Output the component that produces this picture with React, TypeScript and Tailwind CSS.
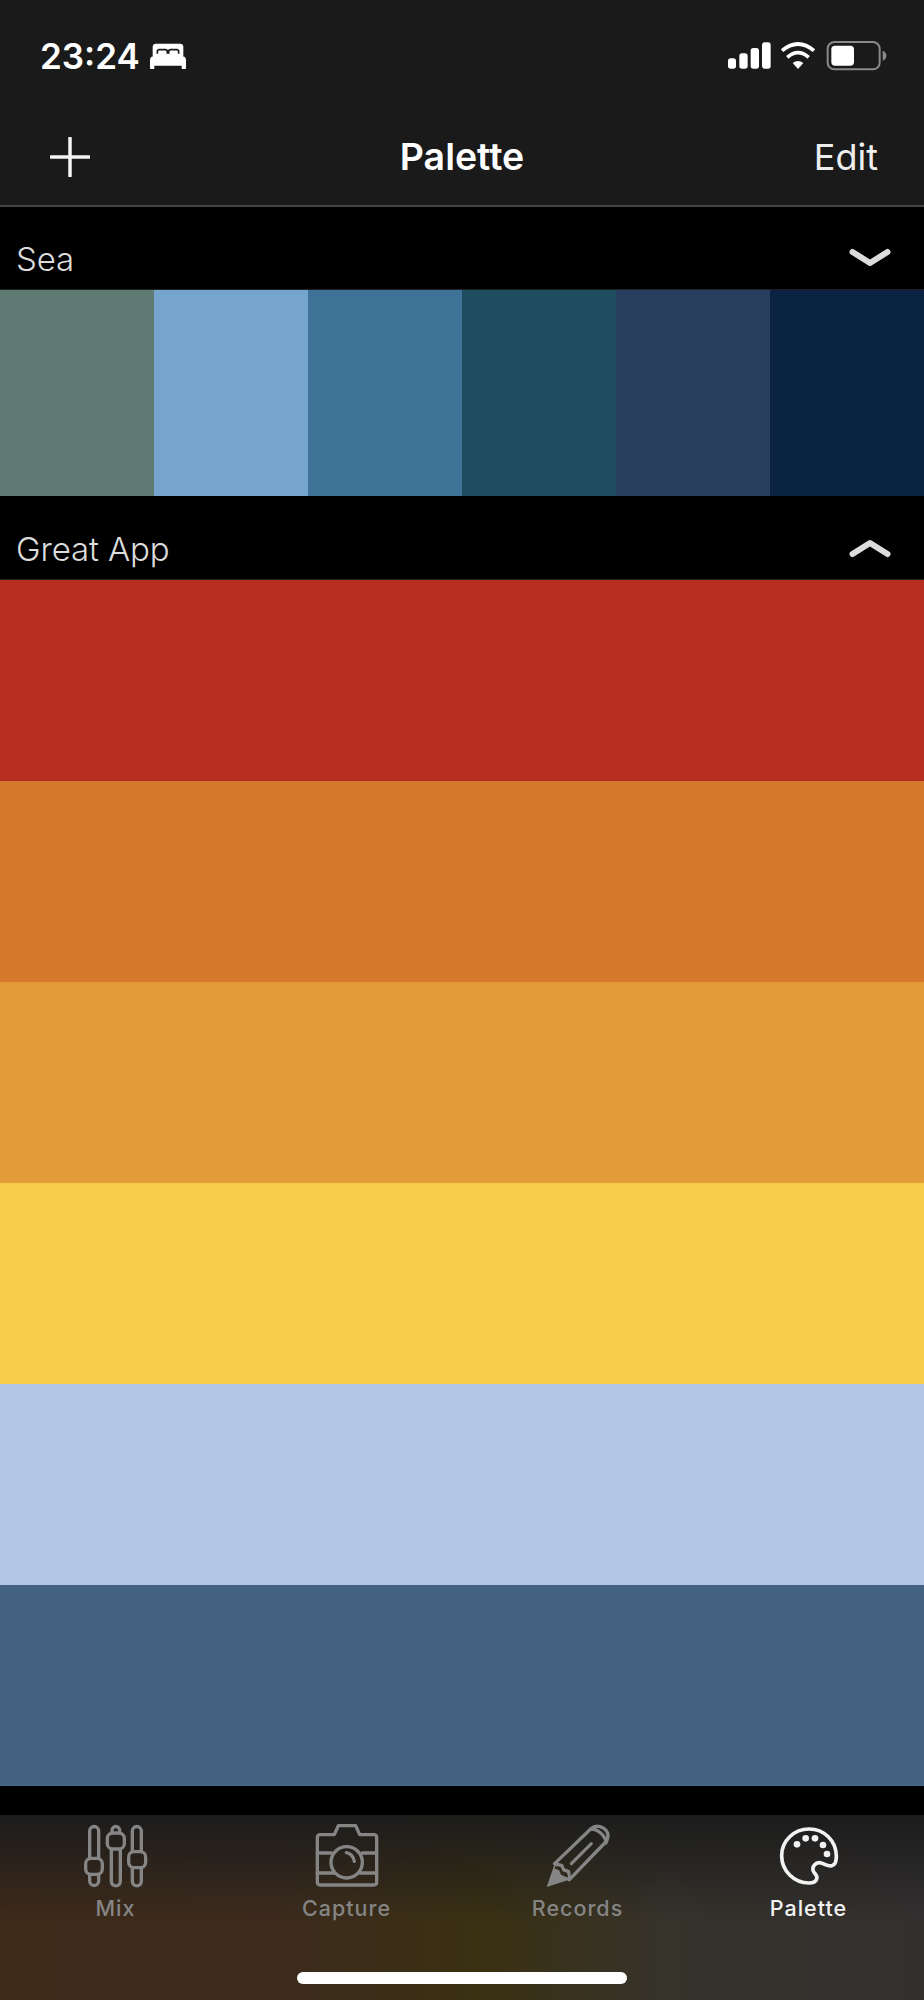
const sea = ["bg-[#5f7a72]", "bg-[#75a5cd]", "bg-[#3e7296]", "bg-[#1f4d60]", "bg-[#283e5e]", "bg-[#0a2342]"];
const bands = ["bg-[#b72e20]", "bg-[#d57a2c]", "bg-[#e29b36]", "bg-[#f7cc4a]", "bg-[#b4c7e7]", "bg-[#446382]"];

function Bed() {
  return (
    <svg width="38" height="26" viewBox="450 128 112 78" fill="white">
      <rect x="460" y="130" width="92" height="44" rx="10" />
      <g fill="none" stroke="#1a1a1a" strokeWidth="5">
        <path d="M474 160v-6q0-6 6-6h18q6 0 6 6v6" />
        <path d="M508 160v-6q0-6 6-6h18q6 0 6 6v6" />
      </g>
      <path d="M452 180q0-12 12-12h84q12 0 12 12v16h-108z" />
      <rect x="452" y="194" width="13" height="12" rx="2" />
      <rect x="547" y="194" width="13" height="12" rx="2" />
    </svg>
  );
}

function StatusIcons() {
  return (
    <svg width="160" height="32" viewBox="795 120 480 96">
      <g fill="white">
        <rect x="798" y="175" width="24" height="31" rx="8" />
        <rect x="832" y="160" width="25" height="46" rx="8" />
        <rect x="866" y="144" width="25" height="62" rx="8" />
        <rect x="900" y="127" width="26" height="79" rx="8" />
        <path d="M1008 207l-16-18q16-12 32 0z" />
      </g>
      <g fill="none" stroke="white" strokeWidth="11">
        <path d="M976 172q32-28 64 0" />
        <path d="M960 152q48-40 96 0" />
      </g>
      <rect x="1097" y="126" width="156" height="82" rx="20" fill="none" stroke="#8a8a8a" strokeWidth="6" />
      <rect x="1108" y="137" width="68" height="60" rx="11" fill="white" />
      <path d="M1262 152q11 4 11 15t-11 15z" fill="#8a8a8a" />
    </svg>
  );
}

function Chevron({ up }: { up?: boolean }) {
  return (
    <svg width="42" height="20" viewBox="0 0 42 20" className={up ? "rotate-180" : ""} fill="none" stroke="#dcdcdc" strokeWidth="6" strokeLinecap="round" strokeLinejoin="round">
      <path d="M3.500 4l17.500 11 17.500-11" />
    </svg>
  );
}

function MixIcon() {
  return (
    <svg width="64" height="64" viewBox="250 165 192 192" fill="none" stroke="currentColor" strokeWidth="10" strokeLinecap="round">
      <path d="M267 268V186a13.500 13.500 0 0 1 27 0v82" />
      <path d="M267 316v20a13.500 13.500 0 0 0 27 0v-20" />
      <rect x="255" y="268" width="50" height="48" rx="16" />
      <path d="M332 240v97a13.500 13.500 0 0 0 27 0v-97" />
      <path d="M334 192v-8a11 11 0 0 1 23 0v8" />
      <rect x="320" y="192" width="51" height="48" rx="16" />
      <path d="M395 248v-62a13.500 13.500 0 0 1 27 0v62" />
      <path d="M395 296v41a13.500 13.500 0 0 0 27 0v-41" />
      <rect x="384" y="248" width="51" height="48" rx="16" />
    </svg>
  );
}

function CameraIcon() {
  return (
    <svg width="64" height="64" viewBox="942 165 192 192" fill="none" stroke="currentColor" strokeWidth="10" strokeLinecap="round" strokeLinejoin="round">
      <path d="M958 197h42l12-27h52l12 27h42q9 0 9 9v133q0 9-9 9H958q-9 0-9-9V206q0-9 9-9z" />
      <path d="M949 252h42M1084 252h43M949 312h50M1076 312h51" />
      <circle cx="1037" cy="280" r="47" />
      <path d="M1036 251q20 4 24 26" />
    </svg>
  );
}

function PencilIcon() {
  return (
    <svg width="64" height="64" viewBox="250 165 192 192" fill="none" stroke="currentColor" strokeWidth="10" strokeLinecap="round" strokeLinejoin="round">
      <path d="M276 284L384 180q16-14 36-4 24 14 12 40L320 332" />
      <path d="M384 180q18 0 32 14t14 28" />
      <path d="M326 284l60-60" strokeWidth="9" />
      <path d="M276 284l22 6 4 12 16 6 2 24" />
      <path d="M252 354l24-70 44 48z" fill="currentColor" stroke="none" />
      <path d="M280 296l12 4 6 14 14 6" stroke="#2f2a1c" strokeWidth="8" />
    </svg>
  );
}

function PaletteIcon() {
  return (
    <svg width="64" height="64" viewBox="944 165 192 192" fill="none" stroke="currentColor" strokeWidth="11">
      <path d="M1040 180C1085 180 1122 215 1122 262C1122 300 1100 292 1080 283C1060 275 1045 295 1055 310C1070 325 1065 342 1040 342C995 342 958 305 958 260C958 215 995 180 1040 180Z" strokeLinejoin="round" />
      <g fill="currentColor" stroke="none">
        <circle cx="1004" cy="226" r="10" />
        <circle cx="1030" cy="208" r="10" />
        <circle cx="1058" cy="208" r="10" />
        <circle cx="1082" cy="228" r="10" />
        <circle cx="1094" cy="255" r="10" />
      </g>
    </svg>
  );
}

function Tab({ icon, label, active }: { icon: React.ReactNode; label: string; active?: boolean }) {
  return (
    <div className={`flex flex-col items-center ${active ? "text-[#f2f2f2]" : "text-[#858585]"}`}>
      {icon}
      <span className="mt-[6px] text-[21.5px] leading-[28px] font-medium tracking-[1px]">{label}</span>
    </div>
  );
}

function SectionHeader({ title, up, height }: { title: string; up?: boolean; height: string }) {
  return (
    <div className={`flex items-end justify-between border-b border-[#222] pr-[33px] pl-[16px] pb-[11px] text-[33px] leading-[38px] font-light tracking-[-0.1px] text-[#dcdcdc] ${height}`}>
      <span>{title}</span>
      <span className="mb-[10px]"><Chevron up={up} /></span>
    </div>
  );
}

export default function App() {
  return (
    <div className="flex h-[2000px] w-[924px] flex-col overflow-hidden bg-black font-['Inter','Liberation_Sans',sans-serif] text-white">
      <header className="h-[207px] shrink-0 border-b-2 border-[#444] bg-[#1a1a1a]">
        <div className="flex h-[100px] items-start justify-between pt-[36px] pr-[37px] pl-[40px]">
          <div className="flex items-center gap-[9px]">
            <span className="text-[35px] leading-[40px] font-semibold">23:24</span>
            <Bed />
          </div>
          <div className="mt-[4px]"><StatusIcons /></div>
        </div>
        <div className="grid h-[105px] grid-cols-3 items-center pt-[16px] pb-[8px] px-[46px]">
          <svg className="ml-[4px]" width="40" height="40" viewBox="0 0 40 40" stroke="#f4f4f4" strokeWidth="3.500" strokeLinecap="round">
            <path d="M20 1v38M1 20h38" />
          </svg>
          <span className="text-center text-[37.5px] leading-[42px] font-semibold">Palette</span>
          <span className="text-right text-[36px] leading-[42px] text-[#eeeeee]">Edit</span>
        </div>
      </header>

      <SectionHeader title="Sea" height="h-[83px]" />
      <div className="grid h-[206px] shrink-0 grid-cols-6">
        {sea.map((c) => <div key={c} className={c} />)}
      </div>

      <SectionHeader title="Great App" up height="h-[84px]" />
      <div className="flex shrink-0 flex-col">
        {bands.map((c) => <div key={c} className={`h-[201px] ${c}`} />)}
      </div>

      <div className="h-[29px] shrink-0" />

      <nav className="flex h-[185px] shrink-0 flex-col bg-[linear-gradient(180deg,#1c1c1c_0%,rgba(28,28,28,0)_58%),linear-gradient(90deg,#3e2a19_0%,#3d2b1d_30%,#3a3012_52%,#36332b_72%,#333030_100%)]">
        <div className="grid grid-cols-4 pt-[9px]">
          <Tab icon={<MixIcon />} label="Mix" />
          <Tab icon={<CameraIcon />} label="Capture" />
          <Tab icon={<PencilIcon />} label="Records" />
          <Tab icon={<PaletteIcon />} label="Palette" active />
        </div>
        <div className="mx-auto mt-[50px] h-[12px] w-[330px] rounded-full bg-white" />
      </nav>
    </div>
  );
}
